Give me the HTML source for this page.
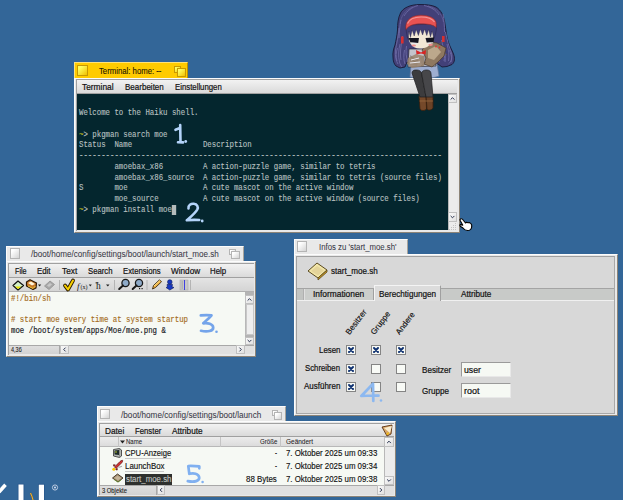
<!DOCTYPE html>
<html><head><meta charset="utf-8">
<style>
*{margin:0;padding:0;box-sizing:border-box}
html,body{width:623px;height:500px;overflow:hidden;background:#336698;font-family:"Liberation Sans",sans-serif;position:relative}
.a{position:absolute}
.t{position:absolute;white-space:nowrap;font-size:8.1px;line-height:10px;color:#101010;-webkit-text-stroke:0.15px currentColor}
.tx{position:absolute;white-space:nowrap;transform-origin:0 0}
.m{position:absolute;white-space:pre;font-family:"Liberation Mono",monospace;font-size:8.5px;line-height:10.69px;transform-origin:0 0;transform:scaleX(0.8676)}
.tab{position:absolute;background:#e9e9e9;border-top:1px solid #fcfcfc;border-left:1px solid #fcfcfc;border-right:1px solid #a8a49c;}
.tab.act{background:#ffcb00;border-top-color:#ffe27a;border-left-color:#ffe27a;border-right-color:#b89000}
.win{position:absolute;background:#e9e9e9;border:1px solid #fcfcfc;border-right-color:#8c8478;border-bottom-color:#8c8478;}
.btn{position:absolute;width:10px;height:10px;border:1px solid #b4b4b4;background:linear-gradient(135deg,#ffffff 20%,#d4d4d4)}
.act .btn{border-color:#c89800;background:linear-gradient(135deg,#ffff60 20%,#f0c000)}
.menu{position:absolute;background:linear-gradient(#f2f2f2,#dadada);border-bottom:1px solid #a0a0a0}
.sb{position:absolute;background:#ececec;border-left:1px solid #b8b8b8}
.arr{position:absolute;background:linear-gradient(135deg,#fafafa,#e0e0e0);border:1px solid #c0c0c0}
.cb{position:absolute;width:10px;height:10px;border:1px solid #848484;background:#f8faf6}
.cb svg{position:absolute;left:0;top:0}
</style></head><body>

<!-- ===== Terminal window ===== -->
<div class="tab act" style="left:74px;top:62px;width:114px;height:16px">
  <div class="btn" style="left:2px;top:2px;width:11px;height:11px"></div>
  <div class="btn" style="left:99px;top:3px;width:7px;height:7px"></div><div class="btn" style="left:102px;top:5px;width:9px;height:9px"></div>
</div>
<div class="win" style="left:74px;top:78px;width:386px;height:155px"></div>
<div class="a" style="left:76px;top:79px;width:382px;height:152px;border-left:1px solid #a0a0a0;border-top:1px solid #a0a0a0"></div>
<div class="menu" style="left:77px;top:80px;width:380px;height:14px"></div>
<div class="a" style="left:77px;top:94px;width:371px;height:136px;background:#04262e"></div>
<div class="m" style="left:79px;top:108.4px;color:#b8c0c0;-webkit-text-stroke:0.12px currentColor">Welcome to the Haiku shell.

<span style="color:#c8c020">~</span>&gt; pkgman search moe
Status  Name                Description
----------------------------------------------------------------------------------
        amoebax_x86         A action-puzzle game, similar to tetris
        amoebax_x86_source  A action-puzzle game, similar to tetris (source files)
S       moe                 A cute mascot on the active window
        moe_source          A cute mascot on the active window (source files)
<span style="color:#c8c020">~</span>&gt; pkgman install moe<span style="background:#b4bcbc">&nbsp;</span></div>
<div class="sb" style="left:448px;top:94px;width:9px;height:136px"></div>
<div class="arr" style="left:448px;top:94px;width:9px;height:9px"></div>
<div class="arr" style="left:448px;top:212px;width:9px;height:10px"></div>

<svg class="a" style="left:448px;top:222px" width="9" height="8" viewBox="0 0 9 8">
  <path d="M7 1.5 H8 M5 3.5 H8 M3 5.5 H8 M1 7.5 H8" stroke="#b8b8b8" stroke-width="0.8" stroke-dasharray="1 1"/>
</svg>
<!-- ===== Editor window ===== -->
<div class="tab" style="left:6px;top:246px;width:238px;height:16px">
  <div class="btn" style="left:3px;top:1px;width:10px;height:11px"></div>
  <div class="btn" style="left:222px;top:2px;width:7px;height:6px"></div><div class="btn" style="left:224px;top:4px;width:9px;height:8px"></div>
</div>
<div class="win" style="left:6px;top:261px;width:250px;height:96px"></div>
<div class="a" style="left:8px;top:263px;width:246px;height:92px;border-left:1px solid #a0a0a0;border-top:1px solid #a0a0a0"></div>
<div class="menu" style="left:9px;top:264px;width:245px;height:14px"></div>
<div class="a" style="left:9px;top:278px;width:245px;height:14px;background:linear-gradient(#e4e4e4,#d4d4d4);border-bottom:1px solid #b0b0b0"></div>
<svg class="a" style="left:0;top:276px" width="256" height="18" viewBox="0 276 256 18">
  <!-- new -->
  <path d="M13 285.5 L18 281 L23.5 285.5 L18 290 Z" fill="#d4f0c8" stroke="#101010" stroke-width="1.2" stroke-linejoin="round"/>
  <path d="M15 286.5 L21.5 286.5 L18 289 Z" fill="#e8e000"/>
  <!-- open folder -->
  <path d="M26.5 282 L30 279.8 L36.5 283 L36 288 L33 289.5 L26.5 286 Z" fill="#c87828" stroke="#301804" stroke-width="1.2" stroke-linejoin="round"/>
  <path d="M28 283 L31 281.5 L35 284 L32 285.5 Z" fill="#fff4d8"/>
  <path d="M28 286 L33 288.5 L35.5 286" stroke="#f0d040" stroke-width="0.9" fill="none"/>
  <path d="M38 284.5 H41.2 L39.6 286.5 Z" fill="#202020"/>
  <!-- save disabled -->
  <path d="M44.5 286 L50 281 L54.5 284.5 L49 289.5 Z" fill="#a8a8a8" stroke="#909090" stroke-width="0.8"/>
  <path d="M47 285.5 L50 283 L52 284.5 L49 287 Z" fill="#c8c8c8"/>
  <!-- separators -->
  <rect x="59" y="280" width="1" height="10" fill="#b4b4b4"/>
  <rect x="114" y="280" width="1" height="10" fill="#b4b4b4"/>
  <rect x="146.5" y="280" width="1" height="10" fill="#b4b4b4"/>
  <rect x="190" y="280" width="1" height="10" fill="#b4b4b4"/>
  <!-- check -->
  <path d="M65 285.5 L68 289.5 L73 280.5" stroke="#2a1a00" stroke-width="3.8" fill="none" stroke-linecap="round" stroke-linejoin="round"/>
  <path d="M65 285.5 L68 289.5 L73 280.5" stroke="#f8d000" stroke-width="2" fill="none" stroke-linecap="round" stroke-linejoin="round"/>
  <!-- f(x) -->
  <text x="77" y="289" font-family="Liberation Serif" font-style="italic" font-size="9" fill="#151515">f</text>
  <text x="80.5" y="288.5" font-family="Liberation Serif" font-size="6" fill="#151515">(x)</text>
  <path d="M88.8 284.5 H91.8 L90.3 286.5 Z" fill="#202020"/>
  <!-- h -->
  <text x="96" y="289" font-family="Liberation Serif" font-size="9.5" fill="#151515">h</text>
  <rect x="95.5" y="282.5" width="3" height="0.8" fill="#151515"/>
  <path d="M106 284.5 H109.5 L107.8 286.5 Z" fill="#202020"/>
  <!-- magnifiers -->
  <circle cx="125.5" cy="283" r="3.6" fill="#8eaac8" stroke="#181818" stroke-width="1.3"/>
  <path d="M123 285.5 L119.2 289" stroke="#181818" stroke-width="2" stroke-linecap="round"/>
  <circle cx="139" cy="283" r="3.6" fill="#8eaac8" stroke="#181818" stroke-width="1.3"/>
  <path d="M136.5 285.5 L132.7 289" stroke="#181818" stroke-width="2" stroke-linecap="round"/>
  <rect x="139" y="288" width="1.2" height="1.2" fill="#181818"/><rect x="141.5" y="288" width="1.2" height="1.2" fill="#181818"/>
  <!-- pencil -->
  <path d="M152.5 289 L153.5 285.5 L159.5 279.8 L161.5 281.8 L155.5 287.5 Z" fill="#f0b040" stroke="#3a2810" stroke-width="0.9" stroke-linejoin="round"/>
  <path d="M154 286 L160 280.5" stroke="#fff0a0" stroke-width="0.8"/>
  <!-- person -->
  <circle cx="169.8" cy="282" r="2.3" fill="#1838c0" stroke="#0a1a60" stroke-width="0.6"/>
  <path d="M167 284.5 L172.5 284.5 L172 287 L174 287.5 L169.8 290 L166 287.5 L167.5 287 Z" fill="#1838c0" stroke="#0a1a60" stroke-width="0.6"/>
  <!-- ruler -->
  <rect x="180" y="280" width="8" height="10" fill="#c8c8c8" stroke="#a8a8a8" stroke-width="0.6"/>
  <path d="M181.5 282 H183 M181.5 284 H183 M181.5 286 H183 M181.5 288 H183" stroke="#808080" stroke-width="0.6"/>
  <rect x="184" y="280" width="1" height="10" fill="#4040e0"/>
</svg>
<div class="a" style="left:9px;top:292px;width:236px;height:53px;background:#f6f9f4"></div>
<div class="m" style="left:11px;top:294px;color:#141420;line-height:10.5px;-webkit-text-stroke:0.15px currentColor"><span style="color:#a46c22">#!/bin/sh</span>

<span style="color:#a46c22"># start moe every time at system startup</span>
moe /boot/system/apps/Moe/moe.png &amp;</div>
<div class="sb" style="left:245px;top:292px;width:9px;height:53px"></div>
<div class="a" style="left:245px;top:292px;width:9px;height:3px;background:#b4b4b4"></div>
<div class="arr" style="left:245px;top:295px;width:9px;height:9px"></div>
<div class="a" style="left:246px;top:304px;width:8px;height:31px;border:1px solid #c8c8c8;background:#eeeeee"></div>
<div class="a" style="left:245px;top:335px;width:9px;height:2px;background:#b4b4b4"></div>
<div class="arr" style="left:245px;top:337px;width:9px;height:8px"></div>
<div class="a" style="left:9px;top:345px;width:245px;height:9px;background:#e0e0e0;border-top:1px solid #a8a8a8"></div>
<div class="a" style="left:9px;top:345px;width:51px;height:9px;background:linear-gradient(#dedede,#d2d2d2);border-top:1px solid #a8a8a8;border-right:1px solid #a8a8a8"></div>
<div class="arr" style="left:60px;top:345px;width:9px;height:9px"></div>
<div class="arr" style="left:236px;top:345px;width:9px;height:9px"></div>


<!-- ===== Info window ===== -->
<div class="tab" style="left:294px;top:239px;width:114px;height:15px">
  <div class="btn" style="left:2px;top:1px;width:10px;height:11px"></div>
</div>
<div class="win" style="left:294px;top:254px;width:324px;height:162px"></div>
<div class="a" style="left:296px;top:256px;width:319px;height:158px;background:#d8d8d8;border-left:1px solid #a0a0a0;border-top:1px solid #a0a0a0;border-right:1px solid #a8a8a8;border-bottom:1px solid #a8a8a8"></div>
<!-- file icon -->
<svg class="a" style="left:306px;top:261px" width="24" height="20" viewBox="0 0 24 20">
  <path d="M2 10 L11 2 L21 9 L12 17 Z" fill="#f2e6a8" stroke="#5a4a20" stroke-width="1"/>
  <path d="M12 17 L21 9 L21 11 L12 19 Z" fill="#c89820" stroke="#5a4a20" stroke-width="0.8"/>
  <path d="M5 10 L11 5 L18 9.5 L12 14.5 Z" fill="#e4d49a"/>
</svg>
<!-- tab bar -->
<div class="a" style="left:297px;top:288px;width:317px;height:13px;background:#c8cac8;border-top:1px solid #a4a4a4;border-bottom:1px solid #f0f0f0"></div>
<div class="a" style="left:297px;top:289px;width:7px;height:11px;background:#c2c4c2;border-right:1px solid #b0b0b0"></div>
<div class="a" style="left:304px;top:289px;width:70px;height:11px;background:#cccecc;border-right:1px solid #a0a0a0;border-left:1px solid #e0e0e0"></div>
<div class="a" style="left:374px;top:285px;width:67px;height:16px;background:#dcdcdc;border-top:1px solid #f4f4f4;border-left:1px solid #f4f4f4;border-right:1px solid #a0a0a0"></div>
<!-- rotated headers -->
<div class="t" style="left:352px;top:327px;font-size:8px;transform-origin:0 100%;transform:rotate(-53deg)">Besitzer</div>
<div class="t" style="left:377px;top:327px;font-size:8px;transform-origin:0 100%;transform:rotate(-53deg)">Gruppe</div>
<div class="t" style="left:402px;top:327px;font-size:8px;transform-origin:0 100%;transform:rotate(-53deg)">Andere</div>
<div class="cb" style="left:346px;top:345px"><svg width="8" height="8" viewBox="0 0 8 8"><path d="M2 2 L6 6 M6 2 L2 6" stroke="#0e3070" stroke-width="2" stroke-linecap="round"/></svg></div>
<div class="cb" style="left:371px;top:345px"><svg width="8" height="8" viewBox="0 0 8 8"><path d="M2 2 L6 6 M6 2 L2 6" stroke="#0e3070" stroke-width="2" stroke-linecap="round"/></svg></div>
<div class="cb" style="left:396px;top:345px"><svg width="8" height="8" viewBox="0 0 8 8"><path d="M2 2 L6 6 M6 2 L2 6" stroke="#0e3070" stroke-width="2" stroke-linecap="round"/></svg></div>
<div class="cb" style="left:346px;top:364px"><svg width="8" height="8" viewBox="0 0 8 8"><path d="M2 2 L6 6 M6 2 L2 6" stroke="#0e3070" stroke-width="2" stroke-linecap="round"/></svg></div>
<div class="cb" style="left:371px;top:364px"></div>
<div class="cb" style="left:396px;top:364px"></div>
<div class="cb" style="left:346px;top:382px"><svg width="8" height="8" viewBox="0 0 8 8"><path d="M2 2 L6 6 M6 2 L2 6" stroke="#0e3070" stroke-width="2" stroke-linecap="round"/></svg></div>
<div class="cb" style="left:371px;top:382px"></div>
<div class="cb" style="left:396px;top:382px"></div>

<div class="a" style="left:461px;top:362px;width:50px;height:15px;background:#f6f9f4;border:1px solid #9a9a9a;border-right-color:#e8e8e8;border-bottom-color:#e8e8e8"></div>
<div class="a" style="left:461px;top:383px;width:50px;height:15px;background:#f6f9f4;border:1px solid #9a9a9a;border-right-color:#e8e8e8;border-bottom-color:#e8e8e8"></div>


<!-- ===== Tracker window ===== -->
<div class="tab" style="left:97px;top:406px;width:189px;height:15px">
  <div class="btn" style="left:2px;top:2px;width:10px;height:10px"></div>
  <div class="btn" style="left:174px;top:3px;width:6px;height:6px"></div><div class="btn" style="left:176px;top:5px;width:8px;height:8px"></div>
</div>
<div class="win" style="left:97px;top:421px;width:299px;height:76px"></div>
<div class="a" style="left:99px;top:423px;width:295px;height:72px;border-left:1px solid #a0a0a0;border-top:1px solid #a0a0a0"></div>
<div class="menu" style="left:100px;top:424px;width:294px;height:13px"></div>
<!-- folder icon -->
<svg class="a" style="left:381px;top:424px" width="13" height="13" viewBox="0 0 13 13">
  <path d="M1 3 L11 1 L10 10 L6 12 Z" fill="#d8a868" stroke="#5a3010" stroke-width="0.9"/>
  <path d="M3 4 L11 2 L9 9 Z" fill="#f8ecd0"/>
  <path d="M5 10 L8 8 L7 11 Z" fill="#f8c000"/>
</svg>
<!-- header -->
<div class="a" style="left:100px;top:437px;width:284px;height:10px;background:linear-gradient(#ececec,#dcdcdc);border-bottom:1px solid #b8b8b8"></div>
<div class="a" style="left:118px;top:437px;width:1px;height:10px;background:#c4c4c4"></div>
<div class="a" style="left:220px;top:437px;width:1px;height:10px;background:#c4c4c4"></div>
<div class="a" style="left:280px;top:437px;width:1px;height:10px;background:#c4c4c4"></div>
<svg class="a" style="left:120px;top:440px" width="5" height="4"><path d="M0 0.5 H5 L2.5 3.5 Z" fill="#222"/></svg>
<!-- list -->
<div class="a" style="left:100px;top:447px;width:284px;height:38px;background:#f6f9f4"></div>
<div class="a" style="left:125px;top:474px;width:47px;height:11px;background:#2e302e"></div>
<div class="a" style="left:125px;top:458px;width:46px;height:1px;background:#c8c8c8"></div>
<div class="a" style="left:125px;top:471px;width:39px;height:1px;background:#c8c8c8"></div>
<!-- icons -->
<svg class="a" style="left:108px;top:446px" width="18" height="40" viewBox="108 446 18 40">
  <!-- cpu monitor -->
  <path d="M113.5 449.5 L119.5 448.5 L121.5 450 L121.5 456 L119.5 457.5 L113.5 456 Z" fill="#b4b8b4" stroke="#303030" stroke-width="0.8" stroke-linejoin="round"/>
  <path d="M114.5 450.5 L119 450 L119 455 L114.5 454.5 Z" fill="#1e2a28"/>
  <circle cx="116" cy="452" r="0.8" fill="#c8d830"/>
  <path d="M119.5 448.5 L119.5 457.5" stroke="#707070" stroke-width="0.6"/>
  <!-- rocket -->
  <path d="M114.5 467 L120 461.5 C121 460.5 122.3 460.2 122.6 460.4 C122.8 460.8 122.5 462 121.5 463 L116 468.5 Z" fill="#d83030" stroke="#501010" stroke-width="0.7" stroke-linejoin="round"/>
  <path d="M115.5 465 L113.5 464.8 L114 466.5 M117 468 L117.2 470 L115.5 469.5" stroke="#501010" stroke-width="0.8" fill="#c02020"/>
  <circle cx="113.8" cy="469.2" r="1.5" fill="#f8c800"/>
  <path d="M118.5 467.5 L122 466.2" stroke="#a8a8a8" stroke-width="1.1"/>
  <!-- script diamond -->
  <path d="M112.5 478 L117.5 474 L123 478 L118 482 Z" fill="#a89478" stroke="#3a2a18" stroke-width="0.9" stroke-linejoin="round"/>
  <path d="M114.5 478 L117.5 475.8 L121 478 L118 480.2 Z" fill="#c4b498"/>
  <path d="M114 479.5 L118 482 L121 480" stroke="#6a9030" stroke-width="0.8" fill="none"/>
</svg>
<!-- scrollbars -->
<div class="sb" style="left:384px;top:437px;width:10px;height:48px"></div>
<div class="arr" style="left:384px;top:437px;width:10px;height:10px"></div>
<div class="arr" style="left:384px;top:476px;width:10px;height:9px"></div>
<div class="a" style="left:100px;top:485px;width:294px;height:10px;background:#e0e0e0;border-top:1px solid #a8a8a8"></div>
<div class="a" style="left:100px;top:485px;width:57px;height:10px;background:linear-gradient(#dedede,#d2d2d2);border-top:1px solid #a8a8a8;border-right:1px solid #a8a8a8"></div>
<div class="arr" style="left:157px;top:485px;width:8px;height:10px"></div>
<div class="arr" style="left:377px;top:485px;width:8px;height:10px"></div>


<!-- TEXTS -->
<div class="tx" style="left:98.80px;top:67.001px;font-size:8.9px;line-height:8.9px;color:#1a1400;-webkit-text-stroke:0.1px #1a1400;transform:scaleX(0.8729)">Terminal: home: --</div>
<div class="tx" style="left:81.90px;top:83.001px;font-size:8.6px;line-height:8.6px;color:#111;-webkit-text-stroke:0.2px #111;transform:scaleX(0.9724)">Terminal</div>
<div class="tx" style="left:124.80px;top:83.001px;font-size:8.6px;line-height:8.6px;color:#111;-webkit-text-stroke:0.2px #111;transform:scaleX(0.9327)">Bearbeiten</div>
<div class="tx" style="left:175.20px;top:83.001px;font-size:8.6px;line-height:8.6px;color:#111;-webkit-text-stroke:0.2px #111;transform:scaleX(0.9063)">Einstellungen</div>
<div class="tx" style="left:30.60px;top:250.001px;font-size:8.6px;line-height:8.6px;color:#3a3a48;-webkit-text-stroke:0.05px #3a3a48;transform:scaleX(0.9430)">/boot/home/config/settings/boot/launch/start_moe.sh</div>
<div class="tx" style="left:14.60px;top:267.004px;font-size:8.6px;line-height:8.6px;color:#111;-webkit-text-stroke:0.2px #111;transform:scaleX(0.8371)">File</div>
<div class="tx" style="left:37.40px;top:267.004px;font-size:8.6px;line-height:8.6px;color:#111;-webkit-text-stroke:0.2px #111;transform:scaleX(0.9110)">Edit</div>
<div class="tx" style="left:61.50px;top:267.004px;font-size:8.6px;line-height:8.6px;color:#111;-webkit-text-stroke:0.2px #111;transform:scaleX(0.9637)">Text</div>
<div class="tx" style="left:87.50px;top:267.004px;font-size:8.6px;line-height:8.6px;color:#111;-webkit-text-stroke:0.2px #111;transform:scaleX(0.8991)">Search</div>
<div class="tx" style="left:122.70px;top:267.004px;font-size:8.6px;line-height:8.6px;color:#111;-webkit-text-stroke:0.2px #111;transform:scaleX(0.8962)">Extensions</div>
<div class="tx" style="left:171.20px;top:267.004px;font-size:8.6px;line-height:8.6px;color:#111;-webkit-text-stroke:0.2px #111;transform:scaleX(0.9514)">Window</div>
<div class="tx" style="left:210.20px;top:267.004px;font-size:8.6px;line-height:8.6px;color:#111;-webkit-text-stroke:0.2px #111;transform:scaleX(0.9103)">Help</div>
<div class="tx" style="left:10.70px;top:347.002px;font-size:6.4px;line-height:6.4px;color:#222;-webkit-text-stroke:0.1px #222;transform:scaleX(0.8590)">4,36</div>
<div class="tx" style="left:318.60px;top:243.002px;font-size:8.4px;line-height:8.4px;color:#3a3a48;-webkit-text-stroke:0.05px #3a3a48;transform:scaleX(0.9316)">Infos zu 'start_moe.sh'</div>
<div class="tx" style="left:331.00px;top:267.001px;font-size:8.6px;line-height:8.6px;color:#111;-webkit-text-stroke:0.2px #111;transform:scaleX(0.9394)">start_moe.sh</div>
<div class="tx" style="left:313.00px;top:290.004px;font-size:8.6px;line-height:8.6px;color:#111;-webkit-text-stroke:0.2px #111;transform:scaleX(0.9755)">Informationen</div>
<div class="tx" style="left:378.50px;top:290.004px;font-size:8.6px;line-height:8.6px;color:#111;-webkit-text-stroke:0.2px #111;transform:scaleX(0.9494)">Berechtigungen</div>
<div class="tx" style="left:461.00px;top:290.004px;font-size:8.6px;line-height:8.6px;color:#111;-webkit-text-stroke:0.2px #111;transform:scaleX(0.9492)">Attribute</div>
<div class="tx" style="left:318.50px;top:346.007px;font-size:8.6px;line-height:8.6px;color:#111;-webkit-text-stroke:0.2px #111;transform:scaleX(0.9176)">Lesen</div>
<div class="tx" style="left:305.00px;top:364.001px;font-size:8.6px;line-height:8.6px;color:#111;-webkit-text-stroke:0.2px #111;transform:scaleX(0.9038)">Schreiben</div>
<div class="tx" style="left:303.60px;top:382.011px;font-size:8.6px;line-height:8.6px;color:#111;-webkit-text-stroke:0.2px #111;transform:scaleX(0.9285)">Ausführen</div>
<div class="tx" style="left:421.60px;top:366.011px;font-size:8.6px;line-height:8.6px;color:#111;-webkit-text-stroke:0.2px #111;transform:scaleX(0.9399)">Besitzer</div>
<div class="tx" style="left:421.60px;top:387.007px;font-size:8.6px;line-height:8.6px;color:#111;-webkit-text-stroke:0.2px #111;transform:scaleX(0.9378)">Gruppe</div>
<div class="tx" style="left:464.00px;top:366.011px;font-size:8.6px;line-height:8.6px;color:#111;-webkit-text-stroke:0.2px #111;transform:scaleX(1.0162)">user</div>
<div class="tx" style="left:464.00px;top:387.007px;font-size:8.6px;line-height:8.6px;color:#111;-webkit-text-stroke:0.2px #111;transform:scaleX(1.0460)">root</div>
<div class="tx" style="left:121.00px;top:411.001px;font-size:8.6px;line-height:8.6px;color:#3a3a48;-webkit-text-stroke:0.05px #3a3a48;transform:scaleX(0.9535)">/boot/home/config/settings/boot/launch</div>
<div class="tx" style="left:105.00px;top:427.007px;font-size:8.6px;line-height:8.6px;color:#111;-webkit-text-stroke:0.2px #111;transform:scaleX(0.9613)">Datei</div>
<div class="tx" style="left:134.90px;top:427.007px;font-size:8.6px;line-height:8.6px;color:#111;-webkit-text-stroke:0.2px #111;transform:scaleX(0.9021)">Fenster</div>
<div class="tx" style="left:172.40px;top:427.007px;font-size:8.6px;line-height:8.6px;color:#111;-webkit-text-stroke:0.2px #111;transform:scaleX(0.9554)">Attribute</div>
<div class="tx" style="left:125.70px;top:439.002px;font-size:6.8px;line-height:6.8px;color:#222;-webkit-text-stroke:0.05px #222;transform:scaleX(0.8821)">Name</div>
<div class="tx" style="left:259.50px;top:439.002px;font-size:6.8px;line-height:6.8px;color:#222;-webkit-text-stroke:0.05px #222;transform:scaleX(0.8977)">Größe</div>
<div class="tx" style="left:286.40px;top:439.002px;font-size:6.8px;line-height:6.8px;color:#222;-webkit-text-stroke:0.05px #222;transform:scaleX(0.9523)">Geändert</div>
<div class="tx" style="left:125.00px;top:449.001px;font-size:8.3px;line-height:8.3px;color:#111;-webkit-text-stroke:0.14px #111;transform:scaleX(0.9208)">CPU-Anzeige</div>
<div class="tx" style="left:125.00px;top:462.001px;font-size:8.3px;line-height:8.3px;color:#111;-webkit-text-stroke:0.14px #111;transform:scaleX(0.9511)">LaunchBox</div>
<div class="tx" style="left:126.00px;top:475.001px;font-size:8.3px;line-height:8.3px;color:#c4c8c4;-webkit-text-stroke:0.1px #c4c8c4;transform:scaleX(0.9484)">start_moe.sh</div>
<div class="tx" style="left:275.00px;top:449.001px;font-size:8.3px;line-height:8.3px;color:#111;-webkit-text-stroke:0.14px #111;transform:scaleX(0.7236)">-</div>
<div class="tx" style="left:275.00px;top:462.001px;font-size:8.3px;line-height:8.3px;color:#111;-webkit-text-stroke:0.14px #111;transform:scaleX(0.7236)">-</div>
<div class="tx" style="left:246.00px;top:475.001px;font-size:8.3px;line-height:8.3px;color:#111;-webkit-text-stroke:0.14px #111;transform:scaleX(0.9537)">88 Bytes</div>
<div class="tx" style="left:286.40px;top:449.001px;font-size:8.3px;line-height:8.3px;color:#111;-webkit-text-stroke:0.14px #111;transform:scaleX(0.9468)">7. Oktober 2025 um 09:33</div>
<div class="tx" style="left:286.40px;top:462.001px;font-size:8.3px;line-height:8.3px;color:#111;-webkit-text-stroke:0.14px #111;transform:scaleX(0.9468)">7. Oktober 2025 um 09:34</div>
<div class="tx" style="left:286.40px;top:475.001px;font-size:8.3px;line-height:8.3px;color:#111;-webkit-text-stroke:0.14px #111;transform:scaleX(0.9468)">7. Oktober 2025 um 09:38</div>
<div class="tx" style="left:102.00px;top:488.012px;font-size:6.8px;line-height:6.8px;color:#222;-webkit-text-stroke:0.12px #222;transform:scaleX(0.8555)">3 Objekte</div>
<!-- /TEXTS -->
<!-- arrows -->
<svg class="a" style="left:0;top:0" width="623" height="500" viewBox="0 0 623 500" fill="none" stroke="#2a3450" stroke-width="1" stroke-linecap="round" stroke-linejoin="round">
<path d="M450.90 99.30 L452.50 97.70 L454.10 99.30"/>
<path d="M450.90 216.20 L452.50 217.80 L454.10 216.20"/>
<path d="M247.90 300.30 L249.50 298.70 L251.10 300.30"/>
<path d="M247.90 340.20 L249.50 341.80 L251.10 340.20"/>
<path d="M65.30 347.90 L63.70 349.50 L65.30 351.10"/>
<path d="M239.70 347.90 L241.30 349.50 L239.70 351.10"/>
<path d="M387.40 442.80 L389.00 441.20 L390.60 442.80"/>
<path d="M387.40 479.70 L389.00 481.30 L390.60 479.70"/>
<path d="M161.80 488.40 L160.20 490.00 L161.80 491.60"/>
<path d="M380.20 488.40 L381.80 490.00 L380.20 491.60"/>
</svg>
<!-- ===== Mascot ===== -->
<svg class="a" style="left:385px;top:0px" width="80" height="115" viewBox="385 0 80 115">
  <!-- back hair -->
  <path d="M420 4.5 C410 4.5 403 8 400.5 13 C398 18 397.5 24 397.5 30 C397 36 396 40 395 45 C393.5 49 392.5 53 393 57 C393 61 394 64 396 66 L400 68 L405 67 L407 62 L412 66 L432 66 L438 64 L442 67 L447 66.5 L452 64.5 C455 62 455 58 453.5 54 C452 50 449.5 46 448 41 C446.5 36 446 30 445 24 C444 16 441 10 436 7 C432 5 426 4.5 420 4.5 Z" fill="#424078" stroke="#1a1836" stroke-width="0.9"/>
  <path d="M399 28 C398.5 36 396.5 44 395.5 50 C395 56 396 61 398 64 M402.5 36 C401.5 44 399.5 52 401 60 M406.5 46 C405.5 52 406 57 408 62 M445.5 32 C447 40 449 47 451.5 53 C452.5 58 451 62 448.5 64 M441.5 40 C443 47 445.5 54 444 61 M438 50 C439.5 54 440.5 58 439 62" stroke="#68669e" stroke-width="1" fill="none"/>
  <path d="M413 7 C405 10 401 16 400 24 M428 6 C437 8 442 14 443.5 22" stroke="#5a5890" stroke-width="1" fill="none"/>
  <path d="M397.5 48 C396 52 395.5 57 397 61 M400 44 C398.5 50 398 56 399.5 62 C400 64 401 66 402 67 M404.5 50 C403.5 55 403.5 60 405 64 M449 50 C451 54 452.5 58 451 62 M447 44 C448.5 50 449.5 56 448.5 61 M443.5 48 C445 53 446 57 445 62 M401 20 C399.5 26 399.5 32 399 38 M443 14 C444 20 444.5 26 444.5 32 M418 5.5 C412 7 407 11 404 16 M424 5.5 C431 7 436 10 439 15" stroke="#6e6ca8" stroke-width="0.85" fill="none"/>
  <!-- legs -->

  <!-- shoes -->
  <path d="M419 96 L426 96 L426.5 109 C425 111 421 111 420 109 Z" fill="#75492a" stroke="#3a200c" stroke-width="0.8"/>
  <path d="M426 96 L433 96 L433 108 C432 110 428 111 427 109 Z" fill="#6a4226" stroke="#3a200c" stroke-width="0.8"/>
  <path d="M419.5 101 L433 101" stroke="#9a6a40" stroke-width="0.8"/>
  <!-- skirt -->
  <path d="M411 65 L437 64 L439 76 C432 79 418 79 410 77 Z" fill="#9eaed0" stroke="#687898" stroke-width="0.7"/>
  <path d="M412 73 C412 70.5 414 70 416.5 70 C419 70 421 71 421.5 73 L426 97 L420 97 Z" fill="#3c3c3e" stroke="#1e1e20" stroke-width="0.7"/>
  <path d="M421.5 73 C422 71 424 70 426.5 70 C429 70 431 71 431 73.5 L433 97 L426 97 Z" fill="#47474a" stroke="#1e1e20" stroke-width="0.7"/>
  <!-- body/shirt -->
  <path d="M409 49 L432 49 L436 66 L408 67 Z" fill="#c4c4cc" stroke="#2a2a32" stroke-width="0.7"/>
  <path d="M410 55 L419 60 L417 66 L410 64 Z M420 58 L426 54 L428 64 L422 66 Z" fill="#9898a2"/>
  <path d="M411 57 L418 61 M412 60 L417 63" stroke="#303038" stroke-width="0.6"/>
  <!-- plush -->
  <path d="M422 50 L430 42 L437 43 L446 48 L444 56 L438 62 L432 67 L424 64 L426 58 Z" fill="#8e7860" stroke="#4a3a28" stroke-width="0.7"/>
  <path d="M428 50 L436 46 L441 52 L434 60 L428 58 Z" fill="#bca88c"/>
  <path d="M431 44 L434 40 M439 44 L443 41 M444 52 L447 55 M426 62 L421 66" stroke="#6a5844" stroke-width="0.8"/>
  <circle cx="436" cy="46.5" r="0.9" fill="#e03030"/><circle cx="439.5" cy="47.5" r="0.9" fill="#e03030"/>
  <path d="M408 58 L416 54 L424 56 L424 66 L412 68 L407 64 Z" fill="#9a846c" opacity="0.85"/>
  <path d="M411 60 L419 58 M410 63 L420 62" stroke="#e8e8ee" stroke-width="1"/>
  <!-- face -->
  <path d="M407.5 26 C407 42 411 48.5 420 48.5 C430 48.5 434.5 42 434.5 26 Z" fill="#f2e8d6"/>
  <!-- bangs strands -->
  <path d="M406 25 L436 24 L436.5 28 C436 33 435 36 433.8 38.5 L432.2 31 L430.5 37 L428.6 29.5 L426.8 35.5 L424.6 29 L422.6 35 L420.4 29 L418.4 35.5 L416.2 29.5 L414.2 36 L412.2 30 L410.4 37.5 L409 31 C408.5 34 408.3 37 408.5 40 C406.5 36 406 31 406 25 Z" fill="#403e76" stroke="#1e1c3c" stroke-width="0.4"/>
  <!-- eyes -->
  <path d="M408.5 38 L419 38 L418.2 43 L410.5 42.5 Z" fill="#141420"/><path d="M411 42.5 L418 43 L417 44.3 L412 44 Z" fill="#e8e8ec"/>
  <path d="M425.5 38 L434.2 37.6 L433.6 42.3 L426.8 42.8 Z" fill="#141420"/><path d="M427 42.8 L433.5 42.3 L432.5 43.6 L428 44 Z" fill="#e8e8ec"/>
  <ellipse cx="413.8" cy="45.5" rx="2.2" ry="1.1" fill="#f09090"/>
  <ellipse cx="430.6" cy="44.8" rx="2.2" ry="1.1" fill="#f09090"/>
  <!-- headband -->
  <path d="M405.8 26 C406.5 19 413 15.2 421 15.2 C429 15.2 435.5 18 436.2 23 L436.2 27.5 C433 24.5 428 23.8 421 23.8 C414 23.8 408.5 25.5 406 29.6 Z" fill="#e85252" stroke="#9a2828" stroke-width="0.6"/>
  <path d="M407.5 23.5 C409.5 19 414 17 421 17 C428 17 432.5 19 434.5 22" stroke="#f49696" stroke-width="1.2" fill="none"/>
  <!-- ribbons -->
  <rect x="401" y="36.5" width="2.6" height="7" fill="#d83030"/>
  <rect x="442" y="36" width="2.6" height="6" fill="#d83030"/>
  <path d="M416 50 L421 52.5 L426 50 L425.5 54.5 L421 53.5 L416.5 54.5 Z" fill="#d82424"/>
</svg>
<!-- hand cursor -->
<svg class="a" style="left:458px;top:217px" width="16" height="15" viewBox="0 0 16 15">
  <path d="M2.5 2 C3.5 1.5 4.5 2 5.5 3.5 L7.5 6 L8.5 5.2 L10 5.8 L11.2 5.5 L12.6 6.4 C13.6 7 14 8.5 13.6 10.5 C13.2 12.5 11.5 13.5 9.5 13.5 C7.5 13.5 6 12.5 5 11 L2.2 9.2 C1.5 8.6 1.8 7.8 2.6 7.6 L4.8 8.2 L2.2 3.6 C1.9 3 2 2.3 2.5 2 Z" fill="#fff" stroke="#000" stroke-width="1.1" stroke-linejoin="round"/>
</svg>
<!-- Haiku logo fragment -->
<svg class="a" style="left:0px;top:480px" width="70" height="20" viewBox="0 480 70 20">
  <path d="M-1 492 L5.5 484.8" stroke="#fff" stroke-width="3.6"/>
  <rect x="17.8" y="483.8" width="6.6" height="17" fill="#28578c"/><rect x="38.1" y="483.8" width="6.6" height="17" fill="#28578c"/><rect x="18.5" y="484.5" width="5" height="16" fill="#fff"/>
  <rect x="38.8" y="484.7" width="5.2" height="16" fill="#fff"/>
  <path d="M30.5 493 C31.5 495 32.5 497.5 33 500" stroke="#8a6020" stroke-width="1.6" fill="none"/><path d="M30.5 493 C31.5 495 32.5 497.5 33 500" stroke="#f8c040" stroke-width="0.9" fill="none"/>
  <circle cx="55" cy="487.5" r="2.6" fill="none" stroke="#d8e0f0" stroke-width="0.8"/>
  <circle cx="55" cy="487.5" r="1" fill="#d8e0f0"/>
</svg>
<!-- handwritten numbers -->
<svg class="a" style="left:0;top:0" width="623" height="500" viewBox="0 0 623 500" fill="none" stroke-linecap="round" stroke-linejoin="round">
  <!-- 1. -->
  <path d="M175.5 129.8 L180 128 M180.2 125 L180.5 142.2 M178 142.2 L183 142.4" stroke="#b4d4fa" stroke-width="2.6"/>
  <circle cx="185.7" cy="141.5" r="1.4" fill="#b4d4fa"/>
  <!-- 2. -->
  <path d="M188.5 208.5 C188 205 191 203.5 193.8 203.8 C197.2 204.2 198.6 206.8 197.3 209.5 C195.5 213 190.5 217 186.8 220.3 C190.8 219.8 195.2 219.8 199.2 220" stroke="#b4d4fa" stroke-width="2.6"/>
  <circle cx="202.2" cy="221" r="1.4" fill="#b4d4fa"/>
  <!-- 3. -->
  <path d="M200.8 315.4 C204.5 315 208.5 315 211.5 315.4 C209 318.5 205.5 321 203.3 323.3 C207.5 322.5 213 324 213.2 327.5 C213.5 331 207.5 332.3 201 330.8" stroke="#74a4ea" stroke-width="2.7"/>
  <circle cx="216.5" cy="331.8" r="1.3" fill="#74a4ea"/>
  <!-- 4. -->
  <path d="M373 383.8 L361.3 396 C366 395.6 373 395.4 378.5 395.6 M373 384 L373.3 401" stroke="#8cb8f0" stroke-width="2.7"/>
  <circle cx="381" cy="400.5" r="1.3" fill="#8cb8f0"/>
  <!-- 5. -->
  <path d="M199.3 468.3 L199.3 466.3 C195 466 191.5 465.8 188.3 466 L189.3 473.8 C193.5 472.6 198.5 473.5 199.2 477.3 C199.8 481 194.5 482.5 187.8 481.2" stroke="#80b0f0" stroke-width="2.7"/>
  <circle cx="202.6" cy="482" r="1.3" fill="#80b0f0"/>
</svg>


</body></html>
